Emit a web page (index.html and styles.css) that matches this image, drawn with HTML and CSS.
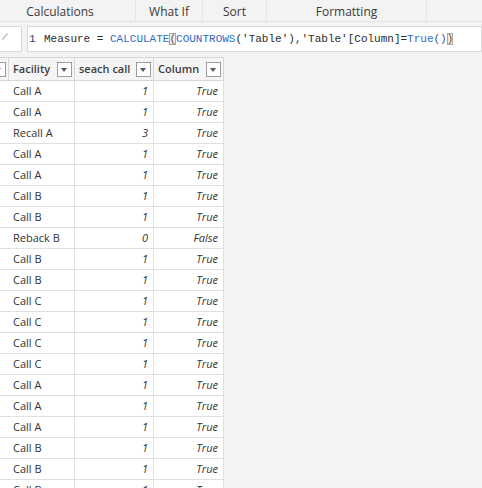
FILE: index.html
```html
<!DOCTYPE html>
<html>
<head>
<meta charset="utf-8">
<link rel="stylesheet" href="styles.css">
</head>
<body>
<div class="ribbon">
  <div class="tab tab-first">Calculations</div>
  <div class="tab tab-whatif">What If</div>
  <div class="tab tab-sort">Sort</div>
  <div class="tab tab-format">Formatting</div>
</div>
<div class="formula-row">
  <div class="fx-buttons">
    <svg width="22" height="24" viewBox="0 0 22 24"><line x1="2.5" y1="12.5" x2="7.5" y2="6.5" stroke="#b8b8b8" stroke-width="1.2"/></svg>
  </div>
  <div class="formula-box">
    <span class="ln">1</span><span class="code"><span class="plain">Measure = </span><span class="fn">CALCULATE</span><span class="match">(</span><span class="fn">COUNTROWS</span><span class="plain">('Table'),'Table'[Column]=</span><span class="fn">True</span><span class="paren">()</span><span class="match">)</span></span>
  </div>
</div>
<div class="grid">
  <div class="hcell c0"><span class="dd dd-cut"></span></div>
  <div class="hcell"><span class="htext">Facility</span><span class="dd"></span></div>
  <div class="hcell"><span class="htext">seach call</span><span class="dd"></span></div>
  <div class="hcell"><span class="htext">Column</span><span class="dd"></span></div>

  <div class="cell"></div><div class="cell">Call A</div><div class="cell num">1</div><div class="cell num">True</div>
  <div class="cell"></div><div class="cell">Call A</div><div class="cell num">1</div><div class="cell num">True</div>
  <div class="cell"></div><div class="cell">Recall A</div><div class="cell num">3</div><div class="cell num">True</div>
  <div class="cell"></div><div class="cell">Call A</div><div class="cell num">1</div><div class="cell num">True</div>
  <div class="cell"></div><div class="cell">Call A</div><div class="cell num">1</div><div class="cell num">True</div>
  <div class="cell"></div><div class="cell">Call B</div><div class="cell num">1</div><div class="cell num">True</div>
  <div class="cell"></div><div class="cell">Call B</div><div class="cell num">1</div><div class="cell num">True</div>
  <div class="cell"></div><div class="cell">Reback B</div><div class="cell num">0</div><div class="cell num">False</div>
  <div class="cell"></div><div class="cell">Call B</div><div class="cell num">1</div><div class="cell num">True</div>
  <div class="cell"></div><div class="cell">Call B</div><div class="cell num">1</div><div class="cell num">True</div>
  <div class="cell"></div><div class="cell">Call C</div><div class="cell num">1</div><div class="cell num">True</div>
  <div class="cell"></div><div class="cell">Call C</div><div class="cell num">1</div><div class="cell num">True</div>
  <div class="cell"></div><div class="cell">Call C</div><div class="cell num">1</div><div class="cell num">True</div>
  <div class="cell"></div><div class="cell">Call C</div><div class="cell num">1</div><div class="cell num">True</div>
  <div class="cell"></div><div class="cell">Call A</div><div class="cell num">1</div><div class="cell num">True</div>
  <div class="cell"></div><div class="cell">Call A</div><div class="cell num">1</div><div class="cell num">True</div>
  <div class="cell"></div><div class="cell">Call A</div><div class="cell num">1</div><div class="cell num">True</div>
  <div class="cell"></div><div class="cell">Call B</div><div class="cell num">1</div><div class="cell num">True</div>
  <div class="cell"></div><div class="cell">Call B</div><div class="cell num">1</div><div class="cell num">True</div>
  <div class="cell"></div><div class="cell">Call B</div><div class="cell num">1</div><div class="cell num">True</div>
</div>
</body>
</html>
```

FILE: styles.css
```css
html, body {
  margin: 0;
  padding: 0;
}
body {
  width: 482px;
  height: 488px;
  overflow: hidden;
  background: #f3f3f3;
  font-family: "Open Sans", "Liberation Sans", sans-serif;
  font-size: 11px;
  color: #333;
}
.ribbon {
  display: flex;
  height: 21px;
  border-bottom: 1px solid #e3e3e3;
  background: #f3f3f3;
}
.tab {
  box-sizing: border-box;
  height: 21px;
  display: flex;
  align-items: center;
  justify-content: center;
  padding-top: 2px;
  border-right: 1px solid #e6e6e6;
  font-size: 12px;
  color: #3a3a3a;
}
.tab-first { width: 136px; padding-right: 15px; }
.tab-whatif { width: 67px; }
.tab-sort { width: 64px; }
.tab-format { width: 160px; }

.formula-row {
  display: flex;
  gap: 5px;
  margin-top: 4px;
  height: 26px;
}
.fx-buttons {
  box-sizing: border-box;
  width: 22px;
  height: 26px;
  background: #fff;
  border: 1px solid #d9d9d9;
  border-left: none;
}
.fx-buttons svg { display: block; }
.formula-box {
  box-sizing: border-box;
  flex: 1;
  height: 26px;
  background: #fff;
  border: 1px solid #d9d9d9;
  display: flex;
  align-items: center;
  font-family: "Liberation Mono", "DejaVu Sans Mono", monospace;
  font-size: 11px;
  white-space: pre;
}
.ln {
  color: #1f3f7a;
  padding-left: 1px;
  width: 15px;
  flex: none;
}
.code { color: #2b2b2b; }
.plain { color: #2b2b2b; }
.fn { color: #2f6bc4; }
.paren { color: #3b4fb0; }
.match {
  color: #8a4a12;
  background: #eeeeee;
  outline: 1px solid #a7a7a7;
  outline-offset: -1px;
}

.grid {
  margin-top: 5px;
  display: grid;
  grid-template-columns: 9px 66px 79px 70px;
  grid-auto-rows: 21px;
  grid-template-rows: 24px;
  width: 224px;
}
.hcell {
  box-sizing: border-box;
  background: #f5f5f5;
  border-top: 1px solid #d6d6d6;
  border-right: 1px solid #d6d6d6;
  border-bottom: 1px solid #d6d6d6;
  display: flex;
  align-items: center;
  justify-content: space-between;
  padding: 0 2px 0 4px;
  font-weight: 600;
  color: #3e3e3e;
  font-size: 11px;
}
.htext { padding-bottom: 1px; }
.hcell.c0 {
  padding: 0;
  justify-content: flex-end;
  overflow: hidden;
}
.dd {
  box-sizing: border-box;
  width: 15px;
  height: 15px;
  border: 1px solid #9c9c9c;
  background: #fff;
  position: relative;
  flex: none;
}
.dd::after {
  content: "";
  position: absolute;
  left: 3px;
  top: 5px;
  border-left: 3.5px solid transparent;
  border-right: 3.5px solid transparent;
  border-top: 4px solid #5a5a5a;
}
.dd-cut { margin-right: 2px; }
.cell {
  box-sizing: border-box;
  background: #fff;
  border-right: 1px solid #e0e0e0;
  border-bottom: 1px solid #e0e0e0;
  display: flex;
  align-items: center;
  padding: 0 5px 2px 4px;
  color: #333;
  white-space: nowrap;
  overflow: hidden;
}
.num {
  justify-content: flex-end;
  font-style: italic;
}
```
